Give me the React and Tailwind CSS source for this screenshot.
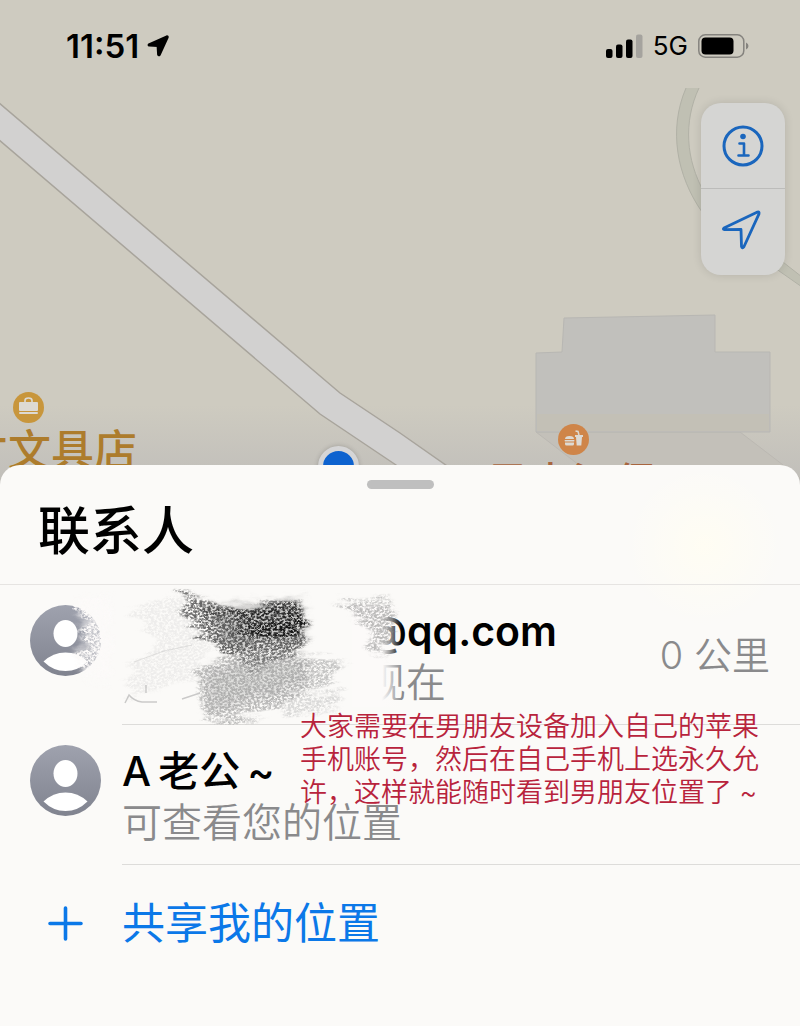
import React from 'react';

const places = [
  { name: "才文具店", icon: "bag", pin: "left-[13px] top-[392px] bg-[#c8963c]", label: "left-[-35px] top-[418px] text-[#ad7c2c]" },
  { name: "贝克汉堡", icon: "food", pin: "left-[558px] top-[424px] bg-[#cf8549]", label: "left-[486px] top-[451px] text-[#a8653f]" }
];

const MapDrawing = () => (
  <svg className="absolute inset-0 w-full h-full" viewBox="0 0 800 500" preserveAspectRatio="xMidYMid slice" aria-hidden="true">
    <defs>
      <linearGradient id="mapShade" x1="0" y1="0" x2="0" y2="1">
        <stop offset="0" stopColor="#bcbab8" stopOpacity="0" />
        <stop offset="0.6" stopColor="#bcbab8" stopOpacity="0.55" />
        <stop offset="1" stopColor="#b8b6b4" stopOpacity="0.8" />
      </linearGradient>
    </defs>
    <rect width="800" height="500" fill="#cecbc0" />
    <rect y="405" width="800" height="95" fill="url(#mapShade)" />
    {/* Building */}
    <path d="M536 432 L596 478 H800 L740 432 Z" fill="#c3c0b9" stroke="#bbb8b2" />
    <path d="M564 318 L715 315 V352 H770 V432 H536 V353 L562 352 Z" fill="#c1c0bc" stroke="#b8b7b3" />
    <rect x="537" y="414" width="232" height="17" fill="#c3c0b6" />
    {/* Roads */}
    <path d="M686 88 C668 130 677 176 702 212 L704 192 C686 160 683 122 699 88 Z" fill="#c0c0b3" />
    <path d="M686 88 C668 130 677 176 702 212 M704 192 C686 160 683 122 699 88" fill="none" stroke="#b1b1a6" />
    <path d="M774 255 L802 277 V287 L772 266 Z" fill="#c0c0b3" stroke="#b1b1a6" />
    <path d="M-2 102 L340 393 L400 433 L500 503 H450 L396 465 L320 414 L-2 139 Z" fill="#d2d1d0" stroke="#a8a49c" strokeWidth="1.5" />
  </svg>
);

const PlaceIcon = ({ type }) => (
  <svg className="w-full h-full" viewBox="0 0 31 31" fill="#dddad4" aria-hidden="true">
    {type === "bag" ? (
      <>
        <path d="M12 10 V8.500 Q12 6 15.500 6 Q19 6 19 8.500 V10" fill="none" stroke="#dddad4" strokeWidth="1.600" />
        <rect x="6" y="10" width="19" height="9" rx="1" />
        <rect x="6" y="20" width="19" height="2" rx="1" />
      </>
    ) : (
      <>
        <path d="M7 15 Q7 12 11.500 12 Q16 12 16 15 Z" />
        <rect x="6.500" y="16" width="10" height="1.500" rx="0.700" />
        <path d="M7 18.500 H16 V20 Q16 21.500 14.500 21.500 H8.500 Q7 21.500 7 20 Z" />
        <path d="M17 11 H25 V13 H24 L23.300 21.500 H18.700 L18 13 H17 Z" />
        <path d="M21 11 L20 7.500 L17.500 7" fill="none" stroke="#dddad4" strokeWidth="1.500" />
      </>
    )}
  </svg>
);

const StatusBar = () => (
  <header className="relative flex items-center justify-between pl-[66px] pr-[51px] pt-[26px]">
    <div className="flex items-center gap-2 h-10">
      <span className="font-semibold text-[33px] leading-10">11:51</span>
      <svg className="w-[22px] h-[22px]" viewBox="0 0 22 22" aria-hidden="true">
        <path d="M19.800 1.200 L1.800 9.300 Q1 10.400 2.200 10.700 L10.500 11 L11 19.500 Q11.800 21 12.800 19.800 L20.800 2.300 Q21 1 19.800 1.200 Z" stroke="#000" strokeWidth="1.800" strokeLinejoin="round" />
      </svg>
    </div>
    <div className="flex items-center gap-[10px] h-10">
      <svg className="w-[37px] h-6" viewBox="0 0 37 24" aria-hidden="true">
        <rect x="0" y="15" width="6.500" height="9" rx="2" />
        <rect x="10" y="10.500" width="6.500" height="13.500" rx="2" />
        <rect x="20" y="5.500" width="6.500" height="18.500" rx="2" />
        <rect x="30" y="0.500" width="6.500" height="23.500" rx="2" fill="#a5a39e" />
      </svg>
      <span className="text-[26px] leading-10">5G</span>
      <svg className="w-[51px] h-6" viewBox="0 0 51 24" aria-hidden="true">
        <rect x="0.800" y="0.800" width="45" height="22.400" rx="6.500" fill="none" stroke="#85837e" strokeWidth="1.500" />
        <rect x="3.500" y="3.500" width="32" height="17" rx="4" />
        <path d="M48 8.500 Q50.500 9.500 50.500 12 Q50.500 14.500 48 15.500 Z" fill="#85837e" />
      </svg>
    </div>
  </header>
);

const MapControls = () => (
  <div className="relative ml-auto mr-[15px] mt-[37px] w-[84px] rounded-[20px] bg-[#d5d5d3] shadow-[0_0_10px_rgba(0,0,0,0.12)] divide-y divide-[#bcbcba]">
    <button type="button" aria-label="信息" className="flex w-full h-[86px] items-center justify-center">
      <svg className="w-[42px] h-[42px]" viewBox="0 0 42 42" fill="none" stroke="#1a66bd" aria-hidden="true">
        <circle cx="21" cy="21" r="19" strokeWidth="3" />
        <circle cx="21" cy="11.500" r="2.800" fill="#1a66bd" stroke="none" />
        <path d="M17.500 18.500 H22 V30.500 M16.500 30.500 H26.500" strokeWidth="2.600" strokeLinecap="round" strokeLinejoin="round" />
      </svg>
    </button>
    <button type="button" aria-label="定位" className="flex w-full h-[86px] items-center justify-center pb-1 pr-1">
      <svg className="w-10 h-10" viewBox="0 0 40 40" fill="none" aria-hidden="true">
        <path d="M36.500 2 L3 18 Q1.500 19.500 3.500 19.700 L20 19.500 L20.500 36.500 Q21.300 39 22.800 37 L38 3.800 Q38.500 1.500 36.500 2 Z" stroke="#1a66bd" strokeWidth="2.800" strokeLinejoin="round" />
      </svg>
    </button>
  </div>
);

const Avatar = () => (
  <svg className="w-[71px] h-[71px] shrink-0" viewBox="0 0 71 71" aria-hidden="true">
    <defs>
      <linearGradient id="avatarFill" x1="0" y1="0" x2="0" y2="1">
        <stop offset="0" stopColor="#9fa2ae" />
        <stop offset="1" stopColor="#80838f" />
      </linearGradient>
    </defs>
    <circle cx="35.500" cy="35.500" r="35.500" fill="url(#avatarFill)" />
    <ellipse cx="35.500" cy="28.500" rx="12" ry="13.500" fill="#fff" />
    <path d="M13.500 56.500 Q23 47.500 35.500 47.500 Q48 47.500 57.500 56.500 Q48 66 35.500 66 Q23 66 13.500 56.500 Z" fill="#fff" />
  </svg>
);

// Pencil strokes that hide the account name
const Scribble = () => (
  <svg className="absolute left-0 top-0 w-[420px] h-[140px]" viewBox="0 0 420 140" aria-hidden="true">
    <defs>
      <filter id="pencil" x="-10%" y="-10%" width="120%" height="120%" colorInterpolationFilters="sRGB">
        <feTurbulence type="fractalNoise" baseFrequency="0.350 0.500" numOctaves="3" seed="4" result="grain" />
        <feColorMatrix in="grain" type="matrix" values="0 0 0 0 0  0 0 0 0 0  0 0 0 0 0  4 0 0 0 -1.400" result="holes" />
        <feTurbulence type="fractalNoise" baseFrequency="0.020 0.120" numOctaves="4" seed="9" result="edge" />
        <feGaussianBlur in="SourceGraphic" stdDeviation="2" result="soft" />
        <feDisplacementMap in="soft" in2="edge" scale="26" xChannelSelector="R" yChannelSelector="G" result="rough" />
        <feComposite in="rough" in2="holes" operator="in" />
      </filter>
      <filter id="smudge" x="-20%" y="-20%" width="140%" height="140%" colorInterpolationFilters="sRGB">
        <feGaussianBlur stdDeviation="4" result="soft" />
        <feTurbulence type="fractalNoise" baseFrequency="0.060 0.160" numOctaves="3" seed="2" result="edge" />
        <feDisplacementMap in="soft" in2="edge" scale="18" xChannelSelector="R" yChannelSelector="G" />
      </filter>
      <linearGradient id="wipe" x1="0" y1="0" x2="1" y2="0">
        <stop offset="0" stopColor="#fcfaf9" />
        <stop offset="0.600" stopColor="#fcfaf9" />
        <stop offset="1" stopColor="#fcfaf9" stopOpacity="0" />
      </linearGradient>
    </defs>
    <rect x="352" y="20" width="50" height="102" fill="url(#wipe)" />
    <path d="M80 20 L108 14 V98 L84 90 L76 68 L84 50 Z" fill="#fcfaf9" opacity="0.500" filter="url(#smudge)" />
    <path d="M76 12 L112 10 V98 L84 94 L78 76 L86 56 Z" fill="#fcfaf9" filter="url(#pencil)" />
    <g filter="url(#smudge)">
      <path d="M205 22 L304 16 V58 L225 64 Z" fill="#777" opacity="0.400" />
      <path d="M204 86 L270 68 L306 74 V100 L210 128 Z" fill="#aaa" opacity="0.350" />
    </g>
    <g filter="url(#pencil)">
      <path d="M174 6 L240 24 L302 14 L306 60 L256 84 L222 68 L200 48 Z" fill="#444" opacity="0.800" />
      <path d="M200 24 L250 28 L302 20 L304 50 L240 54 L236 38 Z" fill="#222" opacity="0.700" />
      <path d="M248 36 L304 30 V48 L252 50 Z" fill="#111" opacity="0.800" />
      <path d="M196 84 L262 66 L306 72 V104 L258 132 L204 132 Z" fill="#888" opacity="0.550" />
      <path d="M300 70 L346 76 L330 96 L304 106 Z" fill="#999" opacity="0.550" />
      <path d="M126 22 L190 10 L206 62 L196 90 L130 112 L134 80 L160 60 Z" fill="#aaa" opacity="0.150" />
      <path d="M338 18 L392 14 L394 34 L386 70 L370 66 L372 42 Z" fill="#888" opacity="0.550" />
      <path d="M268 108 L342 106 L338 122 L284 132 Z" fill="#aaa" opacity="0.400" />
    </g>
    <g fill="none" stroke="#aaa" strokeWidth="1.500" opacity="0.600">
      <path d="M125 118 L129 110 Q134 116 142 117 H157 M146 100 V108 M182 114 L200 108" />
      <path d="M134 77 L164 66 L192 60" strokeWidth="1" opacity="0.500" />
    </g>
  </svg>
);

const contacts = [
  { name: "@qq.com", status: "现在", distance: "0 公里", hidden: true },
  { name: "A\u2009老公\u2009~", status: "可查看您的位置" }
];

const ContactRow = ({ contact }) => (
  <li className="relative flex pl-[30px] h-[140px]">
    <div className="pt-5">
      <Avatar />
    </div>
    <div className="ml-[21px] flex flex-1 items-center justify-between border-b border-[#dddcda] pr-[30px]">
      <div className={contact.hidden ? "pt-1 pl-[244px]" : "pt-1"}>
        <p className={`text-[41px] leading-[52px] ${contact.hidden ? "font-semibold" : "font-medium"}`}>{contact.name}</p>
        <p className="text-[40px] leading-[52px] font-[350] text-[#8a8a8c]">{contact.status}</p>
      </div>
      {contact.distance && (
        <span className="text-[38px] leading-[52px] font-[350] text-[#8a8a8c]">{contact.distance}</span>
      )}
    </div>
    {contact.hidden && <Scribble />}
  </li>
);

const App = () => {
  return (
    <div className="flex flex-col min-h-screen overflow-hidden bg-[#fbfaf8] text-black font-['Inter','Noto_Sans_CJK_SC',sans-serif]">
      {/* Map */}
      <section className="relative h-[500px] overflow-hidden" aria-label="地图">
        <MapDrawing />
        <StatusBar />
        <MapControls />
        {places.map((place) => (
          <div key={place.name}>
            <div className={`absolute w-[31px] h-[31px] rounded-full ${place.pin}`}>
              <PlaceIcon type={place.icon} />
            </div>
            <span className={`absolute text-[43px] leading-[64px] font-medium whitespace-nowrap ${place.label}`}>
              {place.name}
            </span>
          </div>
        ))}
        <div className="absolute left-[318px] top-[446px] w-[41px] h-[41px] rounded-full border-[5px] border-[#d5d5d6] bg-[#0d62cf] shadow-[0_0_5px_rgba(0,0,0,0.2)]"></div>
      </section>

      {/* Contacts sheet */}
      <main className="relative -mt-[35px] flex-1 rounded-t-[20px] bg-[#fbfaf8] bg-[radial-gradient(circle_at_88%_80px,#fffdf3_0px,transparent_80px)]">
        <div className="mx-auto pt-[15px] w-[67px]">
          <div className="h-[9px] rounded-full bg-[#bfbfbf]"></div>
        </div>
        <div className="h-24 pl-[38px] pt-3 border-b border-[#e6e4e2]">
          <h1 className="text-[52px] leading-[62px] font-medium">联系人</h1>
        </div>
        <div className="relative">
          <ul>
            {contacts.map((contact) => (
              <ContactRow key={contact.name} contact={contact} />
            ))}
          </ul>
          <p className="absolute right-[35px] top-[125px] w-[465px] text-[27px] leading-[33px] font-[350] text-[#b8233c]">
            大家需要在男朋友设备加入自己的苹果手机账号，然后在自己手机上选永久允许，这样就能随时看到男朋友位置了 ~
          </p>
        </div>
        <button type="button" className="flex w-full items-center pl-12 h-[116px] text-[#0b78e8]">
          <svg className="w-[35px] h-[35px]" viewBox="0 0 35 35" fill="none" stroke="currentColor" strokeWidth="3.600" strokeLinecap="round" aria-hidden="true">
            <path d="M17.500 2 V33 M2 17.500 H33" />
          </svg>
          <span className="ml-[39px] text-[43px] leading-[64px]">共享我的位置</span>
        </button>
      </main>
    </div>
  );
};

export default App;
